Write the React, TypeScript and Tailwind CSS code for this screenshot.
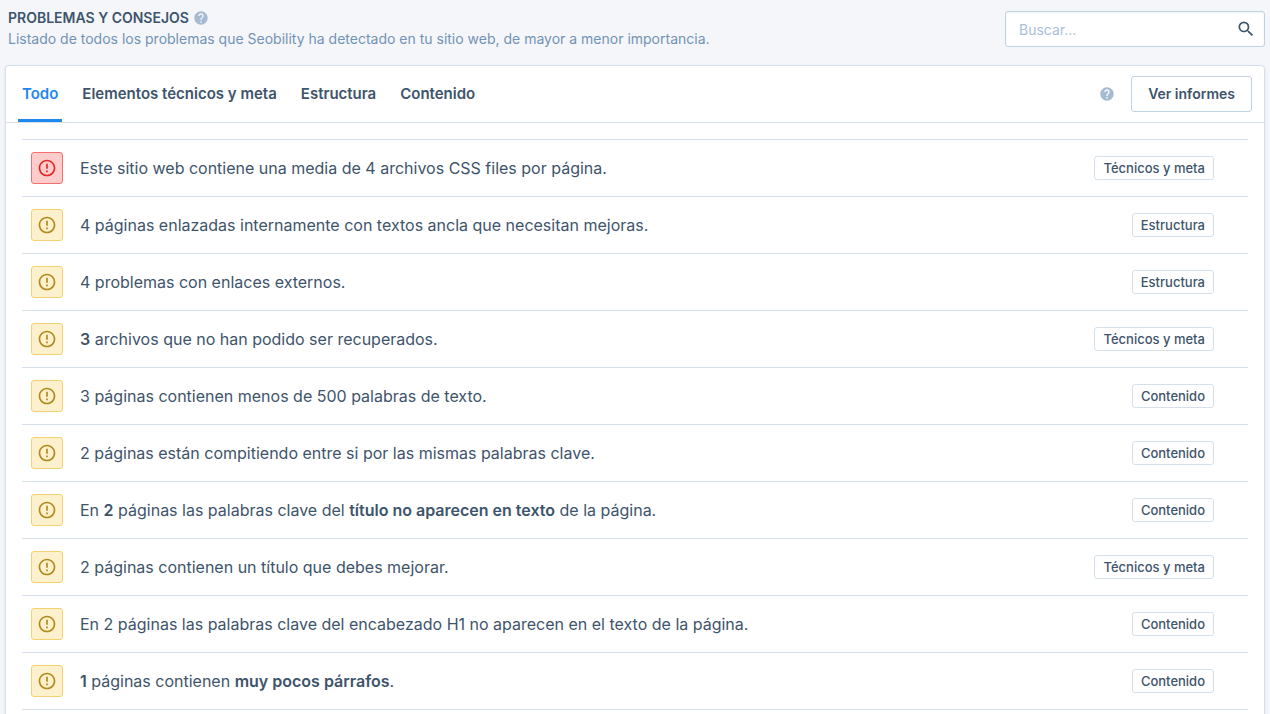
import { useState, type ReactNode } from "react";
import { MdErrorOutline, MdHelp, MdSearch } from "react-icons/md";

type Issue = { critical?: boolean; text: ReactNode; category: string };

const tabs = ["Todo", "Elementos técnicos y meta", "Estructura", "Contenido"];

const issues: Issue[] = [
  { critical: true, text: "Este sitio web contiene una media de 4 archivos CSS files por página.", category: "Técnicos y meta" },
  { text: "4 páginas enlazadas internamente con textos ancla que necesitan mejoras.", category: "Estructura" },
  { text: "4 problemas con enlaces externos.", category: "Estructura" },
  { text: <><Strong>3</Strong> archivos que no han podido ser recuperados.</>, category: "Técnicos y meta" },
  { text: "3 páginas contienen menos de 500 palabras de texto.", category: "Contenido" },
  { text: "2 páginas están compitiendo entre si por las mismas palabras clave.", category: "Contenido" },
  { text: <>En <Strong>2</Strong> páginas las palabras clave del <Strong>título no aparecen en texto</Strong> de la página.</>, category: "Contenido" },
  { text: "2 páginas contienen un título que debes mejorar.", category: "Técnicos y meta" },
  { text: "En 2 páginas las palabras clave del encabezado H1 no aparecen en el texto de la página.", category: "Contenido" },
  { text: <><Strong>1</Strong> páginas contienen <Strong>muy pocos párrafos</Strong>.</>, category: "Contenido" },
];

function Strong({ children }: { children: ReactNode }) {
  return <strong className="font-semibold">{children}</strong>;
}

function IssueRow({ issue }: { issue: Issue }) {
  const tone = issue.critical
    ? "border-[#f57070] bg-[#ffcccc] text-[#e12626]"
    : "border-[#f5d270] bg-[#fdf0cc] text-[#b08a1c]";
  return (
    <tr className="border-y border-[#d5e0eb]">
      <td className="w-12 py-3 pl-[9px]">
        <span className={`flex size-8 items-center justify-center rounded-[3px] border ${tone}`}>
          <MdErrorOutline className="size-5" />
        </span>
      </td>
      <td className="py-3 pl-[10px] text-base">{issue.text}</td>
      <td className="py-3 pr-[34px]">
        <span className="ml-auto flex h-6 w-fit items-center rounded-[3px] border border-[#d5e0eb] px-2 pt-px text-[13px] font-medium whitespace-nowrap">
          {issue.category}
        </span>
      </td>
    </tr>
  );
}

export default function App() {
  const [active, setActive] = useState(tabs[0]);

  return (
    <div className="min-h-screen bg-[#f4f6fa] px-[5px] pt-2 font-['Inter',sans-serif] text-[#3e546b]">
      <header className="flex items-start justify-between gap-6 pl-[3px]">
        <div>
          <h1 className="flex items-center gap-1 text-sm leading-5 font-semibold uppercase">
            Problemas y consejos
            <MdHelp className="size-4 text-[#a6bad2]" />
          </h1>
          <p className="text-sm leading-[22px] text-[#7393b5]">
            Listado de todos los problemas que Seobility ha detectado en tu sitio web, de mayor a menor importancia.
          </p>
        </div>
        <form className="mt-[3px] flex h-9 w-[260px] items-center rounded-[3px] border border-[#c0d2e4] bg-white pr-2 pl-[13px] shadow-[inset_0_1px_2px_rgba(60,84,112,0.08)]">
          <input
            type="search"
            aria-label="Buscar"
            placeholder="Buscar..."
            className="min-w-0 flex-1 bg-transparent pt-px text-sm outline-none placeholder:text-[#a9c0d8]"
          />
          <button type="button" aria-label="Buscar">
            <MdSearch className="size-5" />
          </button>
        </form>
      </header>

      <main className="mt-[15px] rounded-[4px] border border-[#d5e0eb] bg-white pb-4 shadow-[0_1px_3px_rgba(60,84,112,0.12)]">
        <div className="flex h-[57px] items-stretch justify-between border-b border-[#d5e0eb] px-3">
          <nav className="flex gap-4">
            {tabs.map((tab) => (
              <button
                key={tab}
                type="button"
                onClick={() => setActive(tab)}
                className={`border-b-[3px] px-1 pt-1 text-[15px] font-semibold ${
                  tab === active ? "border-[#1e87f0] text-[#1e87f0]" : "border-transparent"
                }`}
              >
                {tab}
              </button>
            ))}
          </nav>
          <div className="flex items-center gap-4">
            <MdHelp className="size-4 text-[#a6bad2]" />
            <button type="button" className="h-9 rounded-[3px] border border-[#c0d2e4] bg-white px-4 text-sm font-semibold">
              Ver informes
            </button>
          </div>
        </div>

        <div className="px-4 pt-4">
          <table className="w-full border-collapse">
            <tbody>
              {issues.map((issue, index) => (
                <IssueRow key={index} issue={issue} />
              ))}
            </tbody>
          </table>
        </div>
      </main>
    </div>
  );
}
